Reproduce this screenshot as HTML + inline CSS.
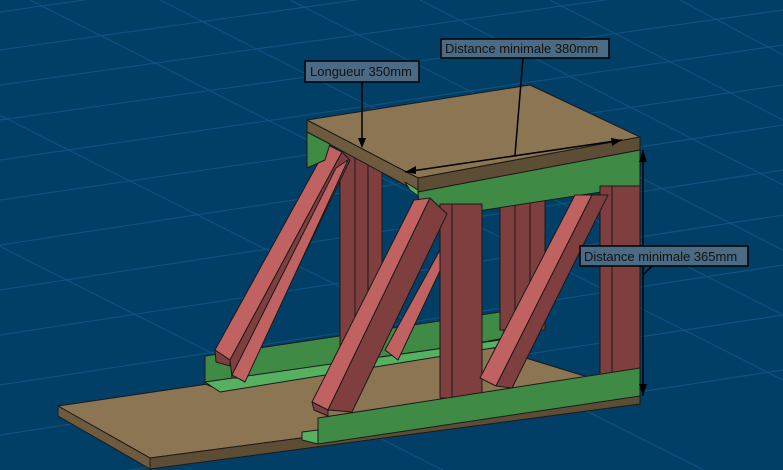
<!DOCTYPE html>
<html><head><meta charset="utf-8"><style>
html,body{margin:0;padding:0;background:#013f67;width:783px;height:470px;overflow:hidden}
svg{display:block}
text{font-family:"Liberation Sans",sans-serif;font-size:13px;fill:#111}
</style></head><body>
<svg width="783" height="470" viewBox="0 0 783 470" xmlns="http://www.w3.org/2000/svg">
<rect width="783" height="470" fill="#013f67"/>
<g stroke="#1c66a0" stroke-width="1" opacity="0.55">
<line x1="0" y1="12" x2="783" y2="-100"/>
<line x1="0" y1="50" x2="783" y2="-60"/>
<line x1="0" y1="85" x2="783" y2="-25"/>
<line x1="0" y1="120" x2="783" y2="10"/>
<line x1="0" y1="160" x2="783" y2="45"/>
<line x1="0" y1="200" x2="783" y2="85"/>
<line x1="0" y1="245" x2="783" y2="125"/>
<line x1="0" y1="290" x2="783" y2="170"/>
<line x1="0" y1="335" x2="783" y2="215"/>
<line x1="0" y1="385" x2="783" y2="265"/>
<line x1="0" y1="435" x2="783" y2="315"/>
<line x1="0" y1="490" x2="783" y2="370"/>
<line x1="30" y1="0" x2="783" y2="380"/>
<line x1="160" y1="0" x2="783" y2="315"/>
<line x1="290" y1="0" x2="783" y2="250"/>
<line x1="420" y1="0" x2="783" y2="185"/>
<line x1="550" y1="0" x2="783" y2="120"/>
<line x1="680" y1="0" x2="783" y2="55"/>
<line x1="-100" y1="65" x2="783" y2="510"/>
<line x1="-230" y1="130" x2="700" y2="600"/>
</g>
<g stroke="#1a1a1a" stroke-width="1" stroke-linejoin="round">
<polygon points="58,406 480,344 640,393 150,458" fill="#8b7553"/>
<polygon points="58,406 150,458 150,469 58,416" fill="#6e5a3e"/>
<polygon points="150,458 640,393 640,404 150,469" fill="#5e4d35"/>
<polygon points="205,356 500,312 505,338 220,390 205,384" fill="#3f8a45"/>
<polygon points="205,382 500,340 505,346 220,392" fill="#55b060"/>
<rect x="340" y="150" width="42" height="200" fill="#7f3f3f"/>
<line x1="355" y1="150" x2="355" y2="350"/><line x1="368" y1="155" x2="368" y2="350"/>
<rect x="500" y="200" width="45" height="130" fill="#7f3f3f"/>
<line x1="515" y1="200" x2="515" y2="330"/><line x1="530" y1="200" x2="530" y2="330"/>
<polygon points="215,350 328,145 342,152 230,360" fill="#c06262"/>
<polygon points="230,360 342,152 350,160 245,378 232,378" fill="#7f3f3f"/>
<polygon points="232,375 336,168 348,160 245,382" fill="#c06262"/>
<polygon points="215,350 230,360 230,366 216,362" fill="#7f3f3f"/>
<polygon points="385,350 440,250 445,260 398,360" fill="#c06262"/>
<polygon points="307,120 530,85 640,137 418,178" fill="#8b7553"/>
<polygon points="307,120 418,178 418,192 307,132" fill="#6e5a3e"/>
<polygon points="418,178 640,137 640,150 418,192" fill="#5e4d35"/>
<polygon points="307,132 330,144 325,160 307,168" fill="#3f8a45"/>
<polygon points="418,192 640,150 640,186 420,220" fill="#3f8a45"/>
<polygon points="405,182 418,190 418,196 410,190" fill="#55b060"/>
<rect x="440" y="204" width="42" height="194" fill="#7f3f3f"/>
<line x1="452" y1="204" x2="452" y2="398"/>
<rect x="600" y="186" width="40" height="188" fill="#7f3f3f"/>
<line x1="612" y1="186" x2="612" y2="374"/>
<polygon points="312,402 414,200 430,198 328,410" fill="#c06262"/>
<polygon points="328,410 430,198 447,214 352,412" fill="#7f3f3f"/>
<polygon points="312,402 328,410 328,416 314,410" fill="#7f3f3f"/>
<polygon points="480,378 575,195 592,195 496,386" fill="#c06262"/>
<polygon points="496,386 592,195 608,195 512,388" fill="#7f3f3f"/>
<polygon points="318,418 640,368 640,396 318,444" fill="#3f8a45"/>
<polygon points="302,432 318,430 318,444 302,440" fill="#55b060"/>
</g>
<g stroke="#000" stroke-width="1.5" fill="none">
<line x1="405" y1="172" x2="622" y2="140"/>
<line x1="643" y1="150" x2="643" y2="396"/>
<line x1="362" y1="82" x2="362" y2="145"/>
<line x1="523" y1="58" x2="515" y2="155"/>
<line x1="643" y1="275" x2="652" y2="266"/>
</g>
<g fill="#000">
<polygon points="405,172 416,166 416,174"/>
<polygon points="622,140 611,138 612,146"/>
<polygon points="643,150 639,162 647,162"/>
<polygon points="643,396 639,384 647,384"/>
<polygon points="362,148 358,138 366,138"/>
</g>
<g stroke="#000" stroke-width="1.5" fill="#4b6a83">
<rect x="305" y="61" width="114" height="21"/>
<rect x="441" y="39" width="168" height="19"/>
<rect x="580" y="246" width="168" height="20"/>
</g>
<text x="310" y="76">Longueur 350mm</text>
<text x="445" y="53">Distance minimale 380mm</text>
<text x="584" y="261">Distance minimale 365mm</text>
</svg>
</body></html>
